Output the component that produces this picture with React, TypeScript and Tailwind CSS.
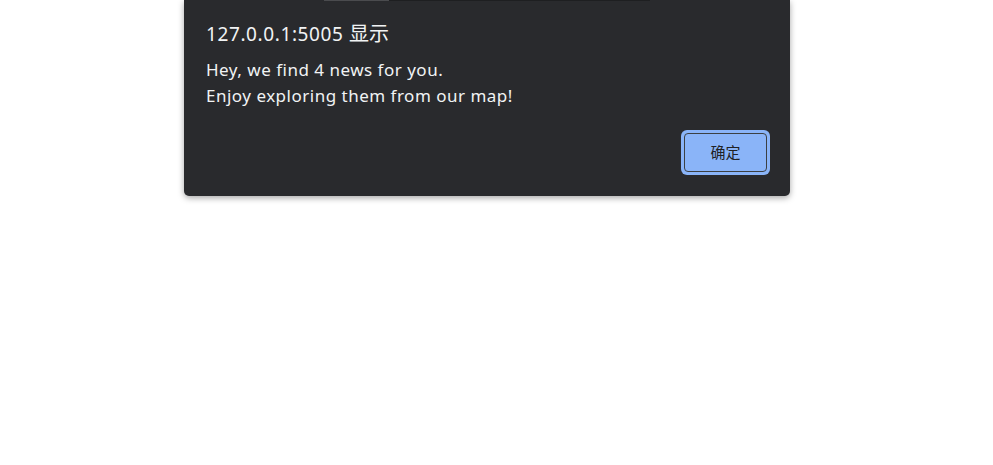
export default function App() {
  return (
    <div className="w-[993px] h-[465px] bg-white">
      <div className="ml-[184px] w-[606px] h-[196px] flex flex-col bg-[#292a2d] rounded-b-[5px] shadow-[0_2px_6px_rgba(0,0,0,0.35)] font-['Noto_Sans','Noto_Sans_CJK_SC',sans-serif] text-[#f1f3f4]">
        <div className="flex h-px">
          <div className="w-[140px]" />
          <div className="w-[65px] bg-[#4a4b4e]" />
          <div className="w-[261px] bg-[#1e1f21]" />
        </div>
        <div className="pt-[19px] px-[22px] text-[19px] leading-[27px] tracking-[0.6px]">
          127.0.0.1:5005 <span className="text-[20px] tracking-normal">显示</span>
        </div>
        <div className="mt-[9px] px-[22px] text-[17px] leading-[26px] tracking-[0.5px]">
          <div>Hey, we find 4 news for you.</div>
          <div>Enjoy exploring them from our map!</div>
        </div>
        <div className="mt-auto flex justify-end pr-[20px] pb-[21px]">
          <button className="w-[89px] h-[45px] rounded-[6px] bg-[#8ab4f8] p-[3px]">
            <span className="flex h-full w-full items-center justify-center rounded-[4px] border border-[#3c4043] text-[15px] text-[#202124]">
              确定
            </span>
          </button>
        </div>
      </div>
    </div>
  );
}
